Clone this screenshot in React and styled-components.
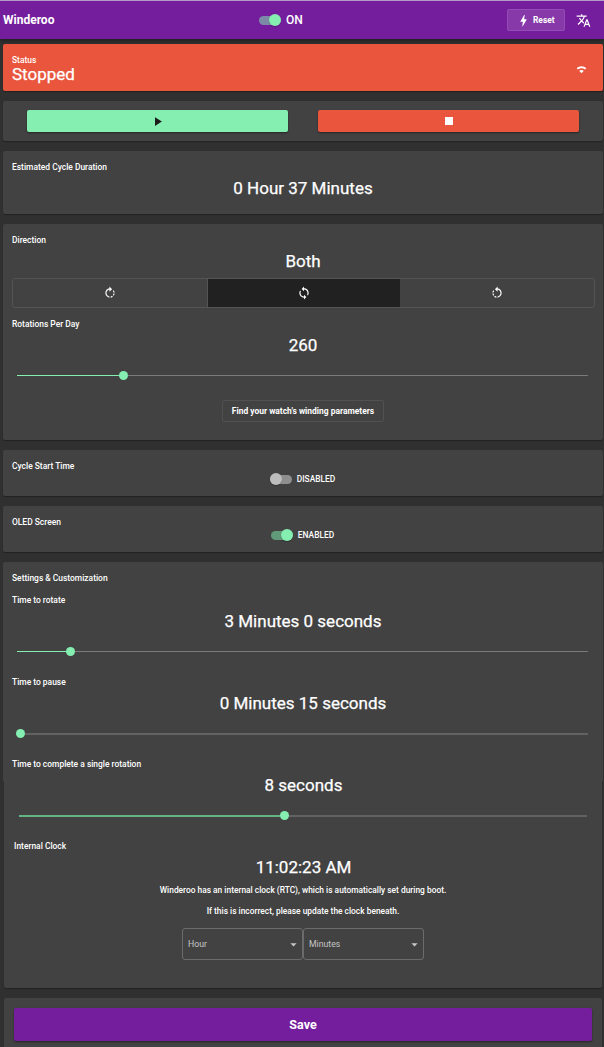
import React from "react";
import styled, { createGlobalStyle } from "styled-components";
import {
  MdBolt, MdTranslate, MdWifi2Bar, MdPlayArrow, MdStop,
  MdRotateRight, MdRotateLeft, MdLoop, MdArrowDropDown,
} from "react-icons/md";

const GlobalStyle = createGlobalStyle`
  * { box-sizing: border-box; }
  body {
    margin: 0;
    background: #303030;
    color: #fff;
    font-family: Roboto, "Liberation Sans", sans-serif;
    overflow: hidden;
  }
  svg { display: block; }
`;

const Page = styled.div`
  width: 604px;
  height: 1047px;
  overflow: hidden;
`;

const Toolbar = styled.header`
  display: grid;
  grid-template-columns: 256px auto 1fr;
  align-items: center;
  height: 39px;
  padding: 0 13px 0 3px;
  border-top: 1px solid #b59ac6;
  background: #751e9d;
  box-shadow: 0 1px 4px rgba(0, 0, 0, 0.45);
`;

const Brand = styled.h1`
  margin: 0;
  font-size: 12px;
  font-weight: 700;
  line-height: 38px;
`;

const ToolbarActions = styled.div`
  display: flex;
  justify-content: flex-end;
  align-items: center;
  gap: 11px;
`;

const ResetButton = styled.button`
  display: flex;
  align-items: center;
  gap: 2px;
  height: 22px;
  width: 58px;
  padding: 0 0 0 8px;
  border: 1px solid #944db4;
  border-radius: 2px;
  background: #8738a9;
  color: #fff;
  font: 700 8.4px Roboto, sans-serif;
`;

const Card = styled.section`
  height: ${(p) => p.$height}px;
  margin: ${(p) => p.$top ?? 10}px ${(p) => p.$inset ?? 1}px 0 ${(p) => (p.$inset ? 4 : 3)}px;
  padding: 11px 9px 0 ${(p) => (p.$inset ? 10 : 9)}px;
  border-radius: ${(p) => p.$radius ?? "2px"};
  background: ${(p) => p.$color ?? "#424242"};
  box-shadow: ${(p) => (p.$flat ? "none" : "0 1px 1px rgba(0, 0, 0, 0.3)")};
`;

const StatusCard = styled(Card)`
  display: flex;
  justify-content: space-between;
`;

const WifiBox = styled.div`
  padding: 5px 5px 0 0;
`;

const StatusValue = styled.div`
  font-size: 17px;
  font-weight: 400;
  line-height: 18px;
  -webkit-text-stroke: 0.25px #fff;
`;

const Label = styled.div`
  height: 10px;
  margin-top: ${(p) => p.$top ?? 0}px;
  font-size: 8.45px;
  font-weight: 500;
  line-height: 10px;
`;

const Value = styled.div`
  height: 20px;
  margin-top: ${(p) => p.$top ?? 7}px;
  font-size: 17px;
  font-weight: 400;
  line-height: 18px;
  text-align: center;
  -webkit-text-stroke: 0.25px #fff;
`;

const Controls = styled(Card)`
  display: grid;
  grid-template-columns: 261px 261px;
  gap: 30px;
  padding: 9px 24px 0;
`;

const ControlButton = styled.button`
  display: flex;
  align-items: center;
  justify-content: center;
  height: 22px;
  padding: 0;
  border: 0;
  border-radius: 2px;
  background: ${(p) => p.$color};
  color: ${(p) => p.$ink};
  box-shadow: 0 1px 2px rgba(0, 0, 0, 0.45);
`;

const Segments = styled.div`
  display: grid;
  grid-template-columns: 194px 193px 1fr;
  height: 30px;
  margin: 6px -1px 0 0;
  border: 1px solid #545454;
  border-radius: 3px;
`;

const Segment = styled.button`
  display: flex;
  align-items: center;
  justify-content: center;
  padding: 0;
  border: 0;
  border-left: ${(p) => (p.$active ? "1px solid #545454" : "0")};
  background: ${(p) => (p.$active ? "#212121" : "transparent")};
  color: #fff;
`;

const Track = styled.div`
  display: flex;
  align-items: center;
  height: 9px;
  margin: ${(p) => p.$top ?? 15}px 6px 0 ${(p) => p.$left ?? 5}px;
`;

const Filled = styled.div`
  width: ${(p) => p.$width}px;
  height: ${(p) => (p.$soft ? 2 : 1)}px;
  background: ${(p) => (p.$soft ? "#65b285" : "#84efb0")};
`;

const Thumb = styled.div`
  width: 9px;
  height: 9px;
  border-radius: 50%;
  background: #84efb0;
`;

const Rest = styled.div`
  flex: 1;
  height: ${(p) => (p.$soft ? 2 : 1)}px;
  background: ${(p) => (p.$soft ? "#626262" : "#7b7b7b")};
`;

const Slider = ({ value, top, left, soft }) => (
  <Track $top={top} $left={left}>
    <Filled $width={value} $soft={soft} />
    <Thumb />
    <Rest $soft={soft} />
  </Track>
);

const OutlineButton = styled.button`
  display: block;
  width: 162px;
  height: 22px;
  margin: 20px auto 0;
  padding: 0;
  border: 1px solid #515151;
  border-radius: 2px;
  background: transparent;
  color: #fff;
  font: 700 8.45px Roboto, sans-serif;
`;

const ToggleRow = styled.div`
  display: flex;
  align-items: center;
  justify-content: center;
  gap: 5px;
  height: 12px;
  margin-top: ${(p) => p.$top ?? 0}px;
  padding-right: 1px;
  font-size: ${(p) => p.$size ?? 8.4}px;
  font-weight: 500;
  line-height: 12px;
`;

const ToggleTrack = styled.span`
  display: flex;
  align-items: center;
  justify-content: ${(p) => (p.$on ? "flex-end" : "flex-start")};
  width: 22px;
  height: 9px;
  border-radius: 5px;
  background: ${(p) => p.$track};
`;

const Knob = styled.span`
  flex: none;
  width: 12px;
  height: 12px;
  border-radius: 50%;
  background: ${(p) => (p.$on ? "#84efb0" : "#bdbdbd")};
  box-shadow: 0 1px 1px rgba(0, 0, 0, 0.2);
`;

const Toggle = ({ on, track, children, ...rest }) => (
  <ToggleRow {...rest}>
    <ToggleTrack $on={on} $track={track}><Knob $on={on} /></ToggleTrack>
    <span>{children}</span>
  </ToggleRow>
);

const Note = styled.p`
  height: 10px;
  margin: ${(p) => p.$top}px 0 0;
  padding-right: 1px;
  font-size: 8.4px;
  font-weight: 500;
  line-height: 10px;
  text-align: center;
`;

const Selects = styled.div`
  display: flex;
  justify-content: center;
  margin-top: 12px;
  padding-right: 1px;
`;

const Select = styled.div`
  display: flex;
  align-items: center;
  justify-content: space-between;
  width: 121px;
  height: 32px;
  padding: 0 1px 0 5px;
  border: 1px solid #6b6b6b;
  border-radius: 3px;
  color: #c6c6c6;
  font-size: 8.7px;
`;

const SaveButton = styled.button`
  display: block;
  width: 100%;
  height: 33px;
  padding: 0;
  border: 0;
  border-radius: 2px;
  background: #751e9d;
  color: #fff;
  font: 700 12.5px Roboto, sans-serif;
  box-shadow: 0 1px 2px rgba(0, 0, 0, 0.45);
`;

const SaveCard = styled(Card)`
  padding: 10px 10px 0 10px;
`;

export default function App() {
  return (
    <Page>
      <GlobalStyle />
      <Toolbar>
        <Brand>Winderoo</Brand>
        <Toggle on track="#7c89a7" $size={12}>ON</Toggle>
        <ToolbarActions>
          <ResetButton><MdBolt size={15} />Reset</ResetButton>
          <MdTranslate size={15} />
        </ToolbarActions>
      </Toolbar>

      <StatusCard $top={5} $height={47} $color="#e9553d">
        <div>
          <Label>Status</Label>
          <StatusValue>Stopped</StatusValue>
        </div>
        <WifiBox><MdWifi2Bar size={15} /></WifiBox>
      </StatusCard>

      <Controls $height={40}>
        <ControlButton $color="#84efb0" $ink="#1c1c1c"><MdPlayArrow size={15} /></ControlButton>
        <ControlButton $color="#e9553d" $ink="#fff"><MdStop size={16} /></ControlButton>
      </Controls>

      <Card $height={63}>
        <Label>Estimated Cycle Duration</Label>
        <Value>0 Hour 37 Minutes</Value>
      </Card>

      <Card $height={216}>
        <Label>Direction</Label>
        <Value>Both</Value>
        <Segments>
          <Segment><MdRotateRight size={14} /></Segment>
          <Segment $active><MdLoop size={14} /></Segment>
          <Segment><MdRotateLeft size={14} /></Segment>
        </Segments>
        <Label $top={11}>Rotations Per Day</Label>
        <Value>260</Value>
        <Slider value={102} />
        <OutlineButton>Find your watch's winding parameters</OutlineButton>
      </Card>

      <Card $height={46}>
        <Label>Cycle Start Time</Label>
        <Toggle track="#8f8f8f" $top={2}>DISABLED</Toggle>
      </Card>

      <Card $height={46}>
        <Label>OLED Screen</Label>
        <Toggle on track="#619a78" $top={2}>ENABLED</Toggle>
      </Card>

      <Card $height={219} $radius="2px 2px 0 0" $flat>
        <Label>Settings &amp; Customization</Label>
        <Label $top={12}>Time to rotate</Label>
        <Value>3 Minutes 0 seconds</Value>
        <Slider value={49} />
        <Label $top={21}>Time to pause</Label>
        <Value>0 Minutes 15 seconds</Value>
        <Slider value={0} left={4} soft />
        <Label $top={21}>Time to complete a single rotation</Label>
      </Card>
      <Card $top={0} $inset={2} $height={207} $radius="0 0 2px 2px">
        <Value $top={-16}>8 seconds</Value>
        <Slider value={261} top={15} soft />
        <Label $top={21}>Internal Clock</Label>
        <Value>11:02:23 AM</Value>
        <Note $top={7}>Winderoo has an internal clock (RTC), which is automatically set during boot.</Note>
        <Note $top={11}>If this is incorrect, please update the clock beneath.</Note>
        <Selects>
          <Select>Hour<MdArrowDropDown size={15} /></Select>
          <Select>Minutes<MdArrowDropDown size={15} /></Select>
        </Selects>
      </Card>

      <SaveCard $inset={2} $height={60}>
        <SaveButton>Save</SaveButton>
      </SaveCard>
    </Page>
  );
}
